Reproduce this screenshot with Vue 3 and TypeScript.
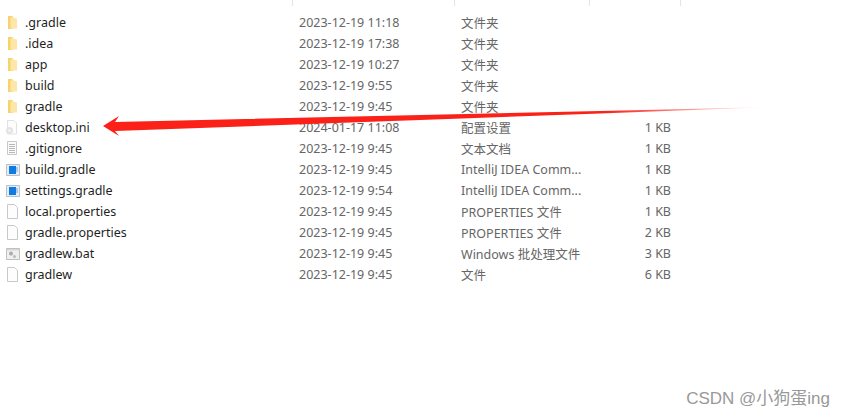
<script setup lang="ts">
type Icon = 'folder' | 'ini' | 'text' | 'idea' | 'blank' | 'bat'

interface FileRow {
  name: string
  date: string
  type: string
  size: string
  icon: Icon
}

const rows: FileRow[] = [
  { name: '.gradle', date: '2023-12-19 11:18', type: '文件夹', size: '', icon: 'folder' },
  { name: '.idea', date: '2023-12-19 17:38', type: '文件夹', size: '', icon: 'folder' },
  { name: 'app', date: '2023-12-19 10:27', type: '文件夹', size: '', icon: 'folder' },
  { name: 'build', date: '2023-12-19 9:55', type: '文件夹', size: '', icon: 'folder' },
  { name: 'gradle', date: '2023-12-19 9:45', type: '文件夹', size: '', icon: 'folder' },
  { name: 'desktop.ini', date: '2024-01-17 11:08', type: '配置设置', size: '1 KB', icon: 'ini' },
  { name: '.gitignore', date: '2023-12-19 9:45', type: '文本文档', size: '1 KB', icon: 'text' },
  { name: 'build.gradle', date: '2023-12-19 9:45', type: 'IntelliJ IDEA Comm...', size: '1 KB', icon: 'idea' },
  { name: 'settings.gradle', date: '2023-12-19 9:54', type: 'IntelliJ IDEA Comm...', size: '1 KB', icon: 'idea' },
  { name: 'local.properties', date: '2023-12-19 9:45', type: 'PROPERTIES 文件', size: '1 KB', icon: 'blank' },
  { name: 'gradle.properties', date: '2023-12-19 9:45', type: 'PROPERTIES 文件', size: '2 KB', icon: 'blank' },
  { name: 'gradlew.bat', date: '2023-12-19 9:45', type: 'Windows 批处理文件', size: '3 KB', icon: 'bat' },
  { name: 'gradlew', date: '2023-12-19 9:45', type: '文件', size: '6 KB', icon: 'blank' }
]
</script>

<template>
  <div class="page">
    <div class="ticks">
      <span class="tick tick-name" />
      <span class="tick tick-date" />
      <span class="tick tick-type" />
      <span class="tick tick-size" />
    </div>

    <div class="list">
      <div v-for="row in rows" :key="row.name" class="row">
        <svg class="icon" viewBox="0 0 16 16" width="16" height="16">
          <template v-if="row.icon === 'folder'">
            <path d="M4 1h4l1 1v12H4z" fill="#f7d36e" />
            <path d="M6.500 2.500h3l3.500 1V13.500H6.500z" fill="#fde7a8" />
          </template>
          <template v-else-if="row.icon === 'ini'">
            <path d="M3.500 0.500h6.500l2.500 2.500v11h-9z" fill="#fcfcfc" stroke="#e2e2e2" />
            <circle cx="5.500" cy="10.500" r="3.500" fill="#e0e4e6" />
            <circle cx="5.500" cy="10.500" r="1.200" fill="#f8f8f8" />
          </template>
          <template v-else-if="row.icon === 'text'">
            <path d="M3.500 0.500h9v13h-9z" fill="#fafafa" stroke="#c8c8c8" />
            <path d="M5 3.500h6M5 5.500h6M5 7.500h6M5 9.500h6M5 11.500h6" stroke="#b8b8b8" />
          </template>
          <template v-else-if="row.icon === 'idea'">
            <path d="M2.500 2.500h13v11h-13z" fill="#e6ecf2" stroke="#b8c0c8" />
            <path d="M5 4h7v8H5z" fill="#0f7be0" />
            <path d="M12 5h2v5h-2z" fill="#a8cbec" />
          </template>
          <template v-else-if="row.icon === 'bat'">
            <path d="M2.500 2.500h13v11h-13z" fill="#efefef" stroke="#c0c0c0" />
            <path d="M3 3h12v1.500H3z" fill="#d8d8d8" />
            <circle cx="7" cy="7.500" r="2" fill="#a8acb0" />
            <circle cx="10.500" cy="10.500" r="1.500" fill="#b8bcc0" />
          </template>
          <path v-else d="M3.500 0.500h7l3 3v11h-10z" fill="#fdfdfd" stroke="#c8c8c8" />
        </svg>
        <span class="name">{{ row.name }}</span>
        <span class="cell">{{ row.date }}</span>
        <span class="cell">{{ row.type }}</span>
        <span class="cell size">{{ row.size }}</span>
      </div>
    </div>

    <svg class="arrow" viewBox="0 0 844 418" width="844" height="418">
      <defs>
        <linearGradient id="tail" x1="103" y1="0" x2="772" y2="0" gradientUnits="userSpaceOnUse">
          <stop offset="0" stop-color="#fb2118" />
          <stop offset="0.75" stop-color="#fb2118" />
          <stop offset="1" stop-color="#fb2118" stop-opacity="0" />
        </linearGradient>
      </defs>
      <path d="M103 126 L119 116 L115 122 L600 111 L772 107 L600 113.500 L115 131 L119 136 Z" fill="url(#tail)" />
    </svg>

    <div class="mark">CSDN @小狗蛋ing</div>
  </div>
</template>

<style scoped>
.page {
  position: relative;
  width: 844px;
  height: 418px;
  overflow: hidden;
  background: #fff;
  font-family: "Noto Sans", "Noto Sans CJK SC", sans-serif;
  font-size: 12.5px;
}

.ticks {
  display: flex;
  height: 6px;
}

.tick {
  flex: none;
  border-right: 1px solid #e5e5e5;
}

.tick-name {
  width: 292px;
}

.tick-date {
  width: 161px;
}

.tick-type {
  width: 134px;
}

.tick-size {
  width: 90px;
}

.list {
  padding-top: 6px;
}

.row {
  display: grid;
  grid-template-columns: 25px 274px 162px 130px 80px;
  align-items: center;
  height: 21px;
  white-space: nowrap;
}

.icon {
  margin-left: 4px;
}

.name {
  color: #1f1f1f;
}

.cell {
  color: #666;
}

.size {
  text-align: right;
  padding-right: 0;
}

.arrow {
  position: absolute;
  top: 0;
  left: 0;
}

.mark {
  position: absolute;
  right: 14px;
  bottom: 9px;
  font-family: "Liberation Sans", "Noto Sans CJK SC", sans-serif;
  font-size: 17px;
  color: #999;
}
</style>
